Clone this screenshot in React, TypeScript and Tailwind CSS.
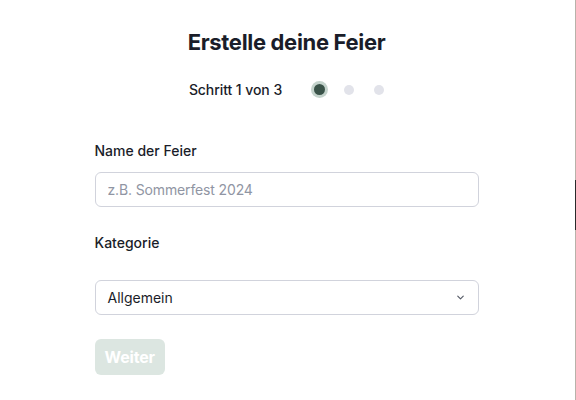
import { ChevronDown } from "lucide-react"

const App = () => {
    return <div className="flex h-[400px] w-[576px] bg-white font-['Inter',sans-serif] text-[#1a1d29]">
        <div className="flex-1 flex justify-center pr-[2px]">
            <div className="w-[384px] pt-[28px]">
                <h1 className="text-center text-[22px] leading-[28px] font-bold tracking-[-0.015em]">Erstelle deine Feier</h1>
                <div className="mt-[23px] flex items-center justify-center">
                    <span className="text-[14px] font-medium tracking-[-0.005em]">Schritt 1 von 3</span>
                    <span className="ml-[29px] w-[17px] h-[17px] rounded-full bg-[#c4d3cc] flex items-center justify-center">
                        <span className="w-[11px] h-[11px] rounded-full bg-[#3a5349]" />
                    </span>
                    <span className="ml-[16px] w-[10px] h-[10px] rounded-full bg-[#e2e3ea]" />
                    <span className="ml-[20px] w-[10px] h-[10px] rounded-full bg-[#e2e3ea]" />
                </div>
                <div className="mt-[41px]">
                    <label className="block text-[14px] font-medium leading-[20px]">Name der Feier</label>
                    <input
                        placeholder="z.B. Sommerfest 2024"
                        className="mt-[11px] w-full h-[35px] rounded-[6px] border border-[#d1d3dc] px-[12px] text-[14px] tracking-[-0.01em] placeholder:text-[#9095a3] outline-none"
                    />
                </div>
                <div className="mt-[26px]">
                    <label className="block text-[14px] font-medium leading-[20px]">Kategorie</label>
                    <div className="mt-[27px] w-full h-[35px] rounded-[6px] border border-[#d1d3dc] px-[12px] flex items-center justify-between text-[14px]">
                        <span>Allgemein</span>
                        <ChevronDown className="w-[11px] h-[11px] text-[#555a66]" strokeWidth={2.5} />
                    </div>
                </div>
                <button className="mt-[24px] h-[36px] px-[10px] rounded-[6px] bg-[#dce6e1] text-white text-[16px] font-bold tracking-[-0.01em]">Weiter</button>
            </div>
        </div>
        <div className="w-px h-full bg-[#b8b2aa] flex flex-col">
            <div className="h-[180px]" />
            <div className="h-[50px] bg-[#2a2a2a]" />
        </div>
    </div>
}

export default App
